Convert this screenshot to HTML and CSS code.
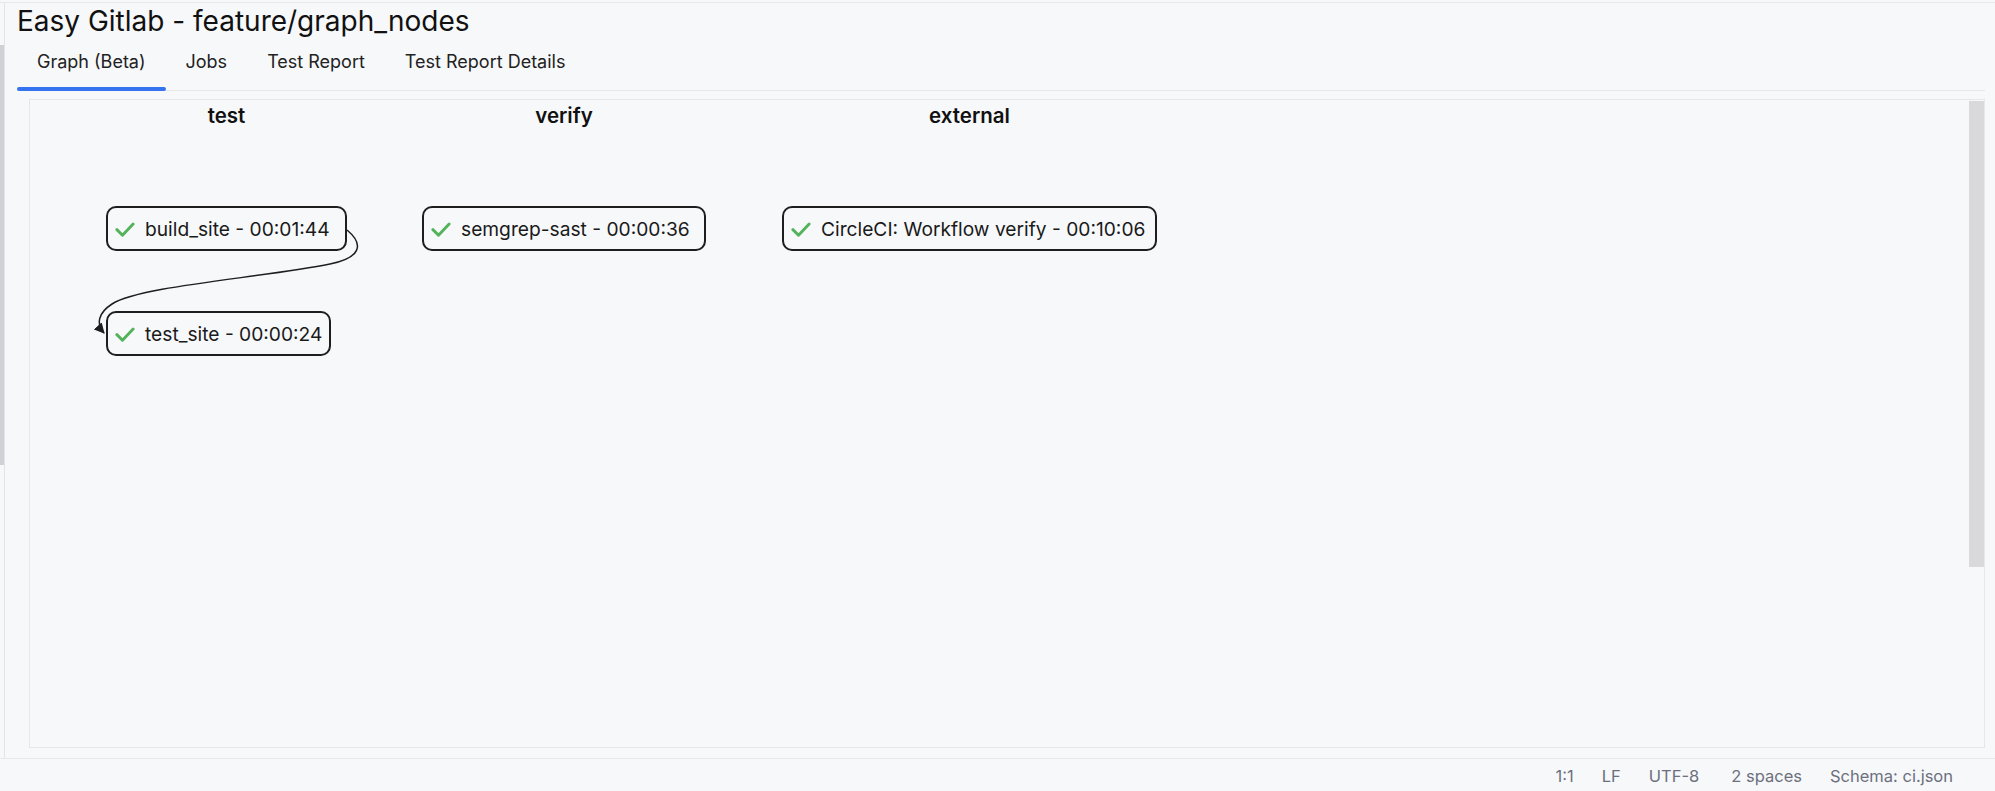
FILE: index.html
```html
<!DOCTYPE html>
<html lang="en">
<head>
  <meta charset="UTF-8">
  <meta name="viewport" content="width=device-width, initial-scale=1.0">
  <title>Easy Gitlab - feature/graph_nodes</title>
  <link rel="stylesheet" href="styles.css">
</head>
<body>
  <div class="window">
    <div class="main">
      <div class="side-strip"><div class="side-thumb"></div></div>

      <div class="content">
        <h1 class="title">Easy Gitlab - feature/graph_nodes</h1>

        <div class="tabs">
          <div class="tab active">Graph (Beta)</div>
          <div class="tab">Jobs</div>
          <div class="tab">Test Report</div>
          <div class="tab">Test Report Details</div>
        </div>

        <div class="panel">
          <div class="graph">
            <!-- dependency edges, drawn under the job nodes -->
            <svg class="edges" width="1940" height="640">
              <defs>
                <marker id="arrow" viewBox="0 0 10 10" refX="9" refY="5" markerWidth="7" markerHeight="7" orient="auto">
                  <path d="M0,0 L10,5 L0,10 z" fill="#1e1e1e"></path>
                </marker>
              </defs>
              <path d="M317,130 C335,145 330,158 300,164 C230,178 110,186 82,204 C68,213 66,224 74,233"
                    fill="none" stroke="#1e1e1e" stroke-width="1.5" marker-end="url(#arrow)"></path>
            </svg>

            <div class="stage stage-test">
              <div class="stage-title">test</div>
              <div class="job" style="width: 241px">
                <svg class="check" width="20" height="20" viewBox="0 0 16 16"><path d="M1.5 8.5 L6 13 L14.5 4"/></svg>
                <span>build_site - 00:01:44</span>
              </div>
              <div class="job" style="width: 225px">
                <svg class="check" width="20" height="20" viewBox="0 0 16 16"><path d="M1.5 8.5 L6 13 L14.5 4"/></svg>
                <span>test_site - 00:00:24</span>
              </div>
            </div>

            <div class="stage stage-verify">
              <div class="stage-title">verify</div>
              <div class="job" style="width: 284px">
                <svg class="check" width="20" height="20" viewBox="0 0 16 16"><path d="M1.5 8.5 L6 13 L14.5 4"/></svg>
                <span>semgrep-sast - 00:00:36</span>
              </div>
            </div>

            <div class="stage stage-external">
              <div class="stage-title">external</div>
              <div class="job" style="width: 375px">
                <svg class="check" width="20" height="20" viewBox="0 0 16 16"><path d="M1.5 8.5 L6 13 L14.5 4"/></svg>
                <span>CircleCI: Workflow verify - 00:10:06</span>
              </div>
            </div>
          </div>
          <div class="scrollbar"></div>
        </div>
      </div>
    </div>

    <div class="statusbar">
      <span class="status-item">1:1</span>
      <span class="status-item">LF</span>
      <span class="status-item">UTF-8</span>
      <span class="status-item indent">2 spaces</span>
      <span class="status-item">Schema: ci.json</span>
    </div>
  </div>
</body>
</html>
```

FILE: styles.css
```css
html, body {
  margin: 0;
  padding: 0;
}
body {
  font-family: Inter, "Noto Sans", sans-serif;
  background-color: #f7f8fa;
  color: #1a1a1a;
}
.window {
  height: 789px;
  margin-top: 2px;
  border-top: 1px solid #e8e9ec;
  display: flex;
  flex-direction: column;
  box-sizing: border-box;
}
.main {
  flex: 1;
  display: flex;
  min-height: 0;
}
.side-strip {
  width: 4px;
  border-right: 1px solid #e3e4e7;
}
.side-thumb {
  margin-top: 42px;
  height: 420px;
  background: #d0d1d4;
}
.content {
  flex: 1;
  display: flex;
  flex-direction: column;
  padding: 1px 10px 10px 12px;
  min-width: 0;
}
.title {
  margin: 0;
  font-size: 28px;
  font-weight: 400;
  line-height: 34px;
  color: #111;
}
.tabs {
  display: flex;
  border-bottom: 1px solid #e6e7ea;
}
.tab {
  position: relative;
  padding: 13px 20px 17px;
  font-size: 18px;
  line-height: 22px;
  color: #222;
}
.tab.active::after {
  content: "";
  position: absolute;
  left: 0;
  right: 0;
  bottom: -1px;
  height: 4px;
  border-radius: 2px;
  background: #3574f0;
}
.panel {
  flex: 1;
  margin: 8px 0 0 12px;
  border: 1px solid #e6e7ea;
  position: relative;
  overflow: hidden;
}
.scrollbar {
  position: absolute;
  top: 1px;
  right: 0;
  width: 15px;
  height: 466px;
  background: #d9d9dc;
}
.graph {
  position: relative;
  height: 100%;
}
.edges {
  position: absolute;
  left: 0;
  top: 0;
}
.stage {
  position: absolute;
  top: 0;
  display: flex;
  flex-direction: column;
  align-items: flex-start;
  gap: 60px;
}
.stage-test { left: 76px; }
.stage-verify { left: 392px; }
.stage-external { left: 752px; }
.stage-title {
  align-self: stretch;
  text-align: center;
  font-size: 20.5px;
  font-weight: 600;
  line-height: 32px;
  margin-bottom: 14px;
  color: #111;
}
.job {
  height: 45px;
  box-sizing: border-box;
  display: flex;
  align-items: center;
  gap: 10px;
  padding-left: 7px;
  border: 2px solid #1e1e1e;
  border-radius: 10px;
  background: #f7f8fa;
  font-size: 19.2px;
  white-space: nowrap;
  position: relative;
}
.check path {
  fill: none;
  stroke: #52b35a;
  stroke-width: 2.3;
  stroke-linecap: round;
  stroke-linejoin: round;
}
.statusbar {
  height: 33px;
  box-sizing: border-box;
  border-top: 1px solid #e6e7ea;
  display: flex;
  justify-content: flex-end;
  align-items: center;
  padding: 2px 28px 0 0;
  font-size: 16.5px;
  color: #6c707e;
}
.status-item {
  padding: 0 14px;
}
.status-item.indent {
  padding-left: 18px;
}
```
